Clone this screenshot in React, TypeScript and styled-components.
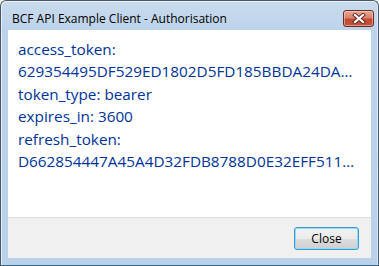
import React from "react";
import styled, { createGlobalStyle } from "styled-components";

const Global = createGlobalStyle`
  html, body { margin: 0; padding: 0; background: #ffffff; }
  body { font-family: "Open Sans", "Noto Sans", sans-serif; }
`;

const Window = styled.div`
  box-sizing: border-box;
  width: 379px;
  height: 266px;
  border: 1px solid #4a5866;
  border-bottom-color: #2b6f80;
  border-radius: 6px 6px 0 0;
  background: linear-gradient(to bottom, #c9dbee 0px, #bcd3ea 30px, #b9d1ea 100%);
  padding: 0 7px 7px;
  display: flex;
  flex-direction: column;
  box-shadow: inset 1px 1px 0 rgba(255, 255, 255, 0.6), inset -1px 0 0 rgba(255, 255, 255, 0.5);
`;

const TitleBar = styled.div`
  height: 29px;
  display: flex;
  align-items: flex-start;
  justify-content: space-between;
`;

const Title = styled.div`
  font-family: "Open Sans", sans-serif;
  font-size: 12px;
  color: #000000;
  margin: 10px 0 0 4px;
  line-height: 16px;
`;

const CloseBox = styled.div`
  box-sizing: border-box;
  width: 31px;
  height: 17px;
  margin: 9px -3px 0 0;
  border: 1px solid #6e2a22;
  border-radius: 3px;
  background: linear-gradient(to bottom, #e8a797 0%, #d9826d 45%, #c24a32 55%, #c0533c 100%);
  box-shadow: inset 0 0 0 1px rgba(255, 220, 210, 0.5);
  display: flex;
  align-items: center;
  justify-content: center;
`;

const Client = styled.div`
  flex: 1;
  display: flex;
  flex-direction: column;
  background: #f0f0f0;
`;

const Content = styled.div`
  flex: 1;
  background: #ffffff;
  border-bottom: 1px solid #dfdfdf;
  padding: 8px 10px 0;
`;

const Line = styled.div`
  font-family: "Open Sans", sans-serif;
  font-size: 15.3px;
  line-height: 22.4px;
  color: #003399;
  white-space: nowrap;
`;

const Footer = styled.div`
  height: 40px;
  display: flex;
  align-items: flex-start;
  justify-content: flex-end;
  padding: 9px 12px 0 0;
  box-sizing: border-box;
`;

const Button = styled.button`
  box-sizing: border-box;
  width: 65px;
  height: 23px;
  padding: 0;
  border: 1px solid #3c9ad2;
  border-radius: 3px;
  background: linear-gradient(to bottom, #f2f2f2 0%, #ebebeb 50%, #dddddd 51%, #cfcfcf 100%);
  box-shadow: inset 0 0 0 1px #8fe0f7;
  font-family: "Open Sans", sans-serif;
  font-size: 12px;
  color: #000000;
`;

const lines = [
  "access_token:",
  "629354495DF529ED1802D5FD185BBDA24DA…",
  "token_type: bearer",
  "expires_in: 3600",
  "refresh_token:",
  "D662854447A45A4D32FDB8788D0E32EFF511…",
];

export default function App() {
  return (
    <>
      <Global />
      <Window>
        <TitleBar>
          <Title>BCF API Example Client - Authorisation</Title>
          <CloseBox>
            <svg width="14" height="11" viewBox="0 0 14 11">
              <path d="M3 2 L11 9 M11 2 L3 9" stroke="#5a2a20" strokeWidth="4" strokeLinecap="square" fill="none" />
              <path d="M3 2 L11 9 M11 2 L3 9" stroke="#ffffff" strokeWidth="2.2" strokeLinecap="square" fill="none" />
            </svg>
          </CloseBox>
        </TitleBar>
        <Client>
          <Content>
            {lines.map((l) => (
              <Line key={l}>{l}</Line>
            ))}
          </Content>
          <Footer>
            <Button>Close</Button>
          </Footer>
        </Client>
      </Window>
    </>
  );
}
